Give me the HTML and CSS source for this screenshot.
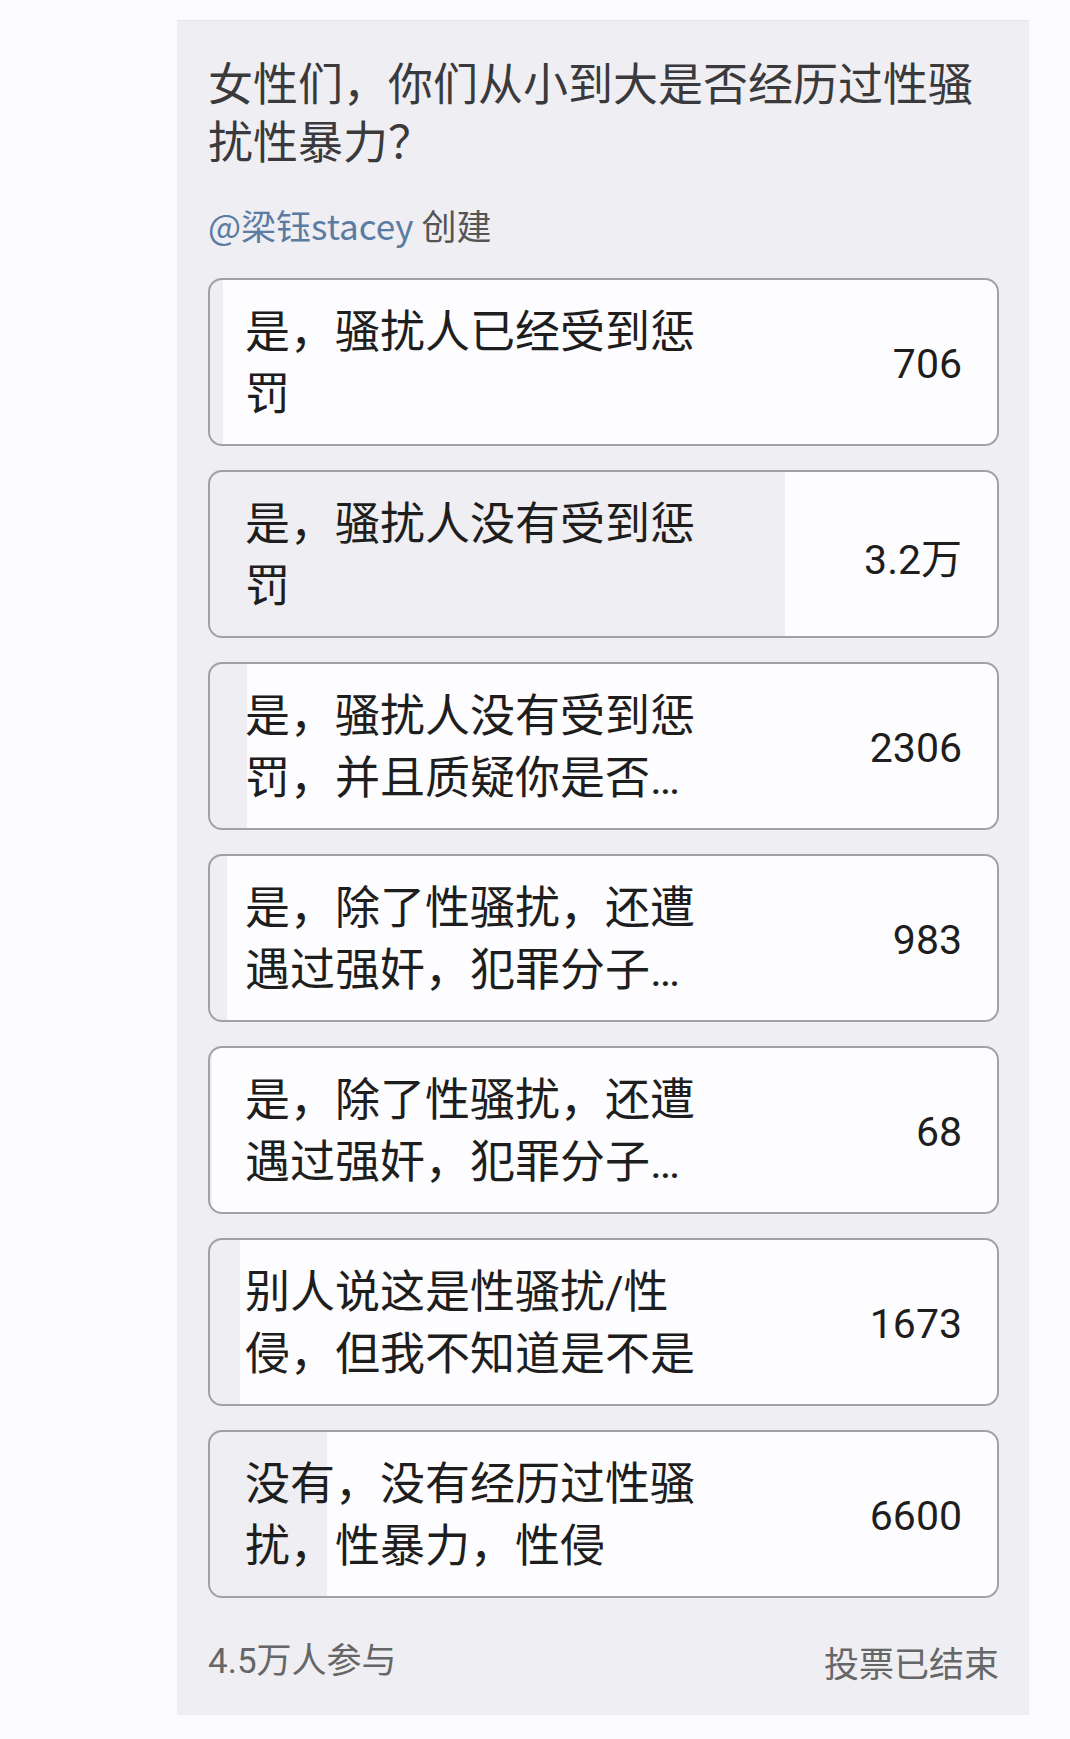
FILE: index.html
```html
<!DOCTYPE html>
<html lang="zh">
<head>
  <meta charset="UTF-8">
  <meta name="viewport" content="width=device-width, initial-scale=1.0">
  <title>投票</title>
  <link rel="stylesheet" href="styles.css">
</head>
<body>
  <div class="poll-card">
    <h1 class="poll-title">女性们，你们从小到大是否经历过性骚扰性暴力？</h1>
    <p class="poll-author"><span class="author-name">@梁钰stacey</span> 创建</p>

    <ul class="poll-options">
      <li class="option" style="--p: 1.6%">
        <span class="option-text">是，骚扰人已经受到惩罚</span>
        <span class="option-count">706</span>
      </li>
      <li class="option" style="--p: 73%">
        <span class="option-text">是，骚扰人没有受到惩罚</span>
        <span class="option-count">3.2万</span>
      </li>
      <li class="option" style="--p: 4.7%">
        <span class="option-text">是，骚扰人没有受到惩罚，并且质疑你是否…</span>
        <span class="option-count">2306</span>
      </li>
      <li class="option" style="--p: 2.1%">
        <span class="option-text">是，除了性骚扰，还遭遇过强奸，犯罪分子…</span>
        <span class="option-count">983</span>
      </li>
      <li class="option" style="--p: 0.2%">
        <span class="option-text">是，除了性骚扰，还遭遇过强奸，犯罪分子…</span>
        <span class="option-count">68</span>
      </li>
      <li class="option" style="--p: 3.8%">
        <span class="option-text">别人说这是性骚扰/性侵，但我不知道是不是</span>
        <span class="option-count">1673</span>
      </li>
      <li class="option" style="--p: 14.9%">
        <span class="option-text">没有，没有经历过性骚扰，性暴力，性侵</span>
        <span class="option-count">6600</span>
      </li>
    </ul>

    <div class="poll-footer">
      <span class="voters">4.5万人参与</span>
      <span>投票已结束</span>
    </div>
  </div>
</body>
</html>
```

FILE: styles.css
```css
/* Général */
* {
  margin: 0;
  padding: 0;
  box-sizing: border-box;
}

body {
  font-family: "Noto Sans CJK SC", sans-serif;
  background-color: #fbfafd;
  color: #222;
}

.poll-card {
  width: 852px;
  margin: 20px 0 0 177px;
  padding: 32px 30px 30px 31px;
  background-color: #efeef2;
  border-top: 1px solid #e6e5e9;
}

.poll-title {
  font-size: 45px;
  font-weight: normal;
  line-height: 58px;
  color: #3a3a3c;
  padding-right: 20px;
}

.poll-author {
  margin-top: 33px;
  font-size: 35px;
  line-height: 46px;
  color: #555;
}

.author-name {
  color: #5a7ca3;
}

.poll-options {
  list-style: none;
  margin-top: 30px;
  display: flex;
  flex-direction: column;
  gap: 24px;
}

/* Barre de résultat dessinée en fond */
.option {
  height: 168px;
  display: flex;
  justify-content: space-between;
  align-items: center;
  padding: 3px 35px 0 35px;
  border: 2px solid #a2a2a4;
  border-radius: 14px;
  background: linear-gradient(to right, #efeef2 var(--p), #fdfcfe var(--p));
}

.option-text {
  width: 456px;
  font-family: Roboto, "Noto Sans CJK SC", sans-serif;
  font-size: 45px;
  line-height: 62px;
  color: #1e1e1e;
}

.option-count {
  font-family: Roboto, "Noto Sans CJK SC", sans-serif;
  font-size: 41px;
  color: #1e1e1e;
}

.poll-footer {
  margin-top: 41px;
  display: flex;
  justify-content: space-between;
  font-size: 35px;
  line-height: 46px;
  color: #666;
}

.voters {
  font-family: Roboto, "Noto Sans CJK SC", sans-serif;
}
```
